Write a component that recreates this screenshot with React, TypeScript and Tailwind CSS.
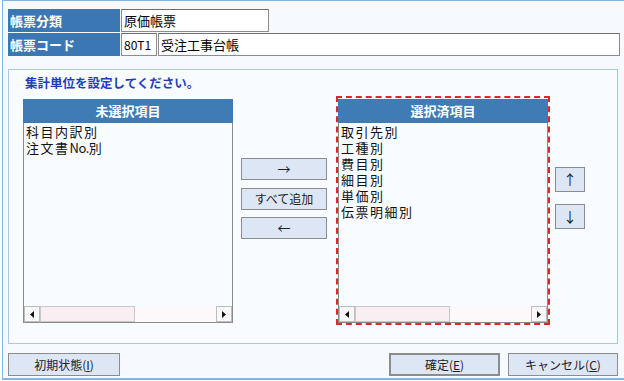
import React from 'react';

const jp = "font-['Noto_Sans_CJK_JP','Noto_Sans',sans-serif]";

function HScroll() {
  return (
    <div className="flex h-[16px] bg-[#fdf8f9]">
      <div className="w-[16px] border border-[#bdbdbd] bg-[#f8f8f8] flex items-center justify-center">
        <svg width="4" height="7" viewBox="0 0 4 7"><path d="M4 0 L0 3.5 L4 7 Z" fill="#111" /></svg>
      </div>
      <div className="w-[95px] border border-[#c8c8c8] bg-[#f9eff2]" />
      <div className="flex-1" />
      <div className="w-[16px] border border-[#bdbdbd] bg-[#f8f8f8] flex items-center justify-center">
        <svg width="4" height="7" viewBox="0 0 4 7"><path d="M0 0 L4 3.5 L0 7 Z" fill="#111" /></svg>
      </div>
    </div>
  );
}

function ListBox({ title, items }: { title: string; items: React.ReactNode[] }) {
  return (
    <div className="w-[210px] flex flex-col">
      <div className="h-[24px] bg-[#3f7cb6] text-white text-[13px] font-bold flex items-center justify-center">
        {title}
      </div>
      <div className="h-[200px] border-l border-r border-b border-[#8a8a8a] bg-[#f8fbff] flex flex-col">
        <div className="flex-1 pl-[2px] pt-[1px] text-[13px] leading-[16px] tracking-[1.5px] text-[#111]">
          {items.map((it, i) => (
            <div key={i} className="h-[16px]">{it}</div>
          ))}
        </div>
        <HScroll />
      </div>
    </div>
  );
}

function Btn({ children, className = '' }: { children: React.ReactNode; className?: string }) {
  return (
    <div
      className={`flex items-center justify-center bg-[#dde6f5] border border-[#8c8c8c] text-[12px] text-[#222] ${className}`}
    >
      {children}
    </div>
  );
}

export default function App() {
  return (
    <div className={`w-[624px] h-[381px] bg-white ${jp}`}>
      <div className="ml-[2px] h-[380px] border-l border-t border-b-2 border-[#84b4e3] bg-[#f6f9fe] pl-[5px] pt-[8px]">
        {/* header info */}
        <div className="flex flex-col gap-[1px]">
          <div className="flex gap-[1px] h-[23px]">
            <div className="w-[112px] bg-[#3b78b3] text-white text-[13px] font-bold flex items-center pl-[2px]">帳票分類</div>
            <div className="w-[148px] bg-white border border-[#8c8c8c] border-t-[#6e6e6e] text-[13px] flex items-center pl-[2px]">原価帳票</div>
          </div>
          <div className="flex gap-[1px] h-[23px]">
            <div className="w-[112px] bg-[#3b78b3] text-white text-[13px] font-bold flex items-center pl-[2px]">帳票コード</div>
            <div className="w-[36px] bg-white border border-[#8c8c8c] border-t-[#6e6e6e] text-[12px] flex items-center pl-[2px]">80T1</div>
            <div className="w-[462px] bg-white border border-[#8c8c8c] border-t-[#6e6e6e] text-[13px] flex items-center pl-[2px]">受注工事台帳</div>
          </div>
        </div>

        {/* group panel */}
        <div className="mt-[13px] w-[610px] h-[275px] border border-[#a6c8ea] bg-[#f8fbff] pl-[14px] pt-[5px]">
          <div className="pl-[2px] h-[16px] leading-[16px] text-[12.5px] font-bold text-[#1d3fbf]">
            集計単位を設定してください。
          </div>
          <div className="mt-[5px] flex items-start">
            <div className="mt-[3px]">
              <ListBox
                title="未選択項目"
                items={['科目内訳別', <>注文書<span className="tracking-[-0.5px]">No.</span>別</>]}
              />
            </div>
            <div className="ml-[8px] mr-[9px] mt-[62px] w-[86px] flex flex-col">
              <Btn className="h-[22px] text-[13px]">→</Btn>
              <Btn className="h-[22px] mt-[8px]">すべて追加</Btn>
              <Btn className="h-[22px] mt-[7px] text-[13px]">←</Btn>
            </div>
            <div className="border-2 border-dashed border-[#e0262a] pt-px">
              <ListBox
                title="選択済項目"
                items={['取引先別', '工種別', '費目別', '細目別', '単価別', '伝票明細別']}
              />
            </div>
            <div className="ml-[5px] mt-[71px] flex flex-col">
              <Btn className="w-[30px] h-[25px] text-[14px]">↑</Btn>
              <Btn className="w-[30px] h-[25px] mt-[12px] text-[14px]">↓</Btn>
            </div>
          </div>
        </div>

        {/* bottom buttons */}
        <div className="mt-[9px] w-[610px] flex">
          <Btn className="w-[112px] h-[23px]">
            初期状態(<span className="underline">I</span>)
          </Btn>
          <div className="flex-1" />
          <Btn className="w-[111px] h-[23px] border-2 border-[#5c5c5c]">
            確定(<span className="underline">E</span>)
          </Btn>
          <Btn className="w-[110px] h-[23px] ml-[8px]">
            キャンセル(<span className="underline">C</span>)
          </Btn>
        </div>
      </div>
    </div>
  );
}
